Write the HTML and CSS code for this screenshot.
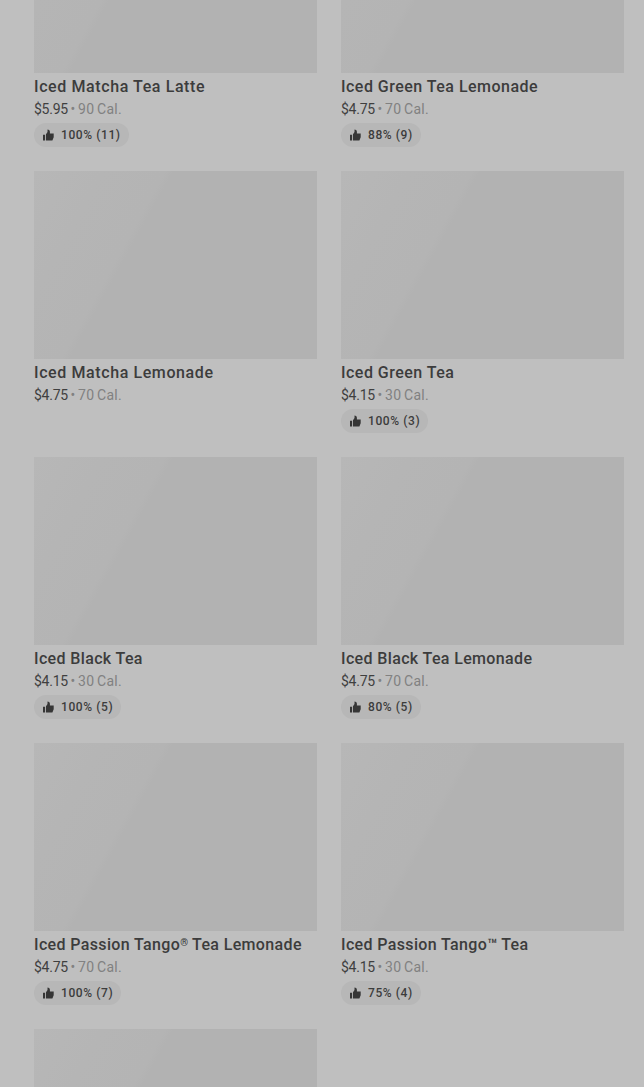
FILE: index.html
```html
<!DOCTYPE html>
<html lang="en">

<head>
    <meta charset="UTF-8">
    <meta name="viewport" content="width=device-width, initial-scale=1.0">
    <title>Iced Teas</title>
    <link rel="stylesheet" href="styles.css">
</head>

<body>
    <svg width="0" height="0" class="sprite">
        <symbol id="thumb" viewBox="0 0 12 12">
            <path d="M1 5.8h2.1v5.7H1zM4 5.2 5.5 3V0.6c1.5 0 2.4 0.9 2.4 2.3v1.6h3.8v3.8L10.4 11.5H4z" />
        </symbol>
    </svg>

    <main class="menu">
        <div class="item">
            <div class="photo"></div>
            <h3 class="name name-wide">Iced Matcha Tea Latte</h3>
            <p class="info"><span class="price">$5.95</span> • 90 Cal.</p>
            <div class="rating"><svg class="icon"><use href="#thumb" /></svg><span>100% (11)</span></div>
        </div>
        <div class="item">
            <div class="photo"></div>
            <h3 class="name">Iced Green Tea Lemonade</h3>
            <p class="info"><span class="price">$4.75</span> • 70 Cal.</p>
            <div class="rating"><svg class="icon"><use href="#thumb" /></svg><span>88% (9)</span></div>
        </div>
        <div class="item">
            <div class="photo"></div>
            <h3 class="name name-wide">Iced Matcha Lemonade</h3>
            <p class="info"><span class="price">$4.75</span> • 70 Cal.</p>
        </div>
        <div class="item">
            <div class="photo"></div>
            <h3 class="name">Iced Green Tea</h3>
            <p class="info"><span class="price">$4.15</span> • 30 Cal.</p>
            <div class="rating"><svg class="icon"><use href="#thumb" /></svg><span>100% (3)</span></div>
        </div>
        <div class="item">
            <div class="photo"></div>
            <h3 class="name name-tight">Iced Black Tea</h3>
            <p class="info"><span class="price">$4.15</span> • 30 Cal.</p>
            <div class="rating"><svg class="icon"><use href="#thumb" /></svg><span>100% (5)</span></div>
        </div>
        <div class="item">
            <div class="photo"></div>
            <h3 class="name name-tight">Iced Black Tea Lemonade</h3>
            <p class="info"><span class="price">$4.75</span> • 70 Cal.</p>
            <div class="rating"><svg class="icon"><use href="#thumb" /></svg><span>80% (5)</span></div>
        </div>
        <div class="item">
            <div class="photo"></div>
            <h3 class="name name-tight">Iced Passion Tango<span class="reg">®</span> Tea Lemonade</h3>
            <p class="info"><span class="price">$4.75</span> • 70 Cal.</p>
            <div class="rating"><svg class="icon"><use href="#thumb" /></svg><span>100% (7)</span></div>
        </div>
        <div class="item">
            <div class="photo"></div>
            <h3 class="name name-tight">Iced Passion Tango<span class="tm">™</span> Tea</h3>
            <p class="info"><span class="price">$4.15</span> • 30 Cal.</p>
            <div class="rating"><svg class="icon"><use href="#thumb" /></svg><span>75% (4)</span></div>
        </div>
        <div class="item item-cut">
            <div class="photo"></div>
        </div>
    </main>
</body>

</html>
```

FILE: styles.css
```css
* {
    box-sizing: border-box;
}

body {
    margin: 0;
    height: 1087px;
    overflow: hidden;
    background-color: #bfbfbf;
    font-family: Roboto, sans-serif;
}

.sprite {
    display: none;
}

/* list is scrolled part way through the first row */
.menu {
    display: grid;
    grid-template-columns: 283px 283px;
    grid-template-rows: repeat(4, 262px) 58px;
    gap: 24px;
    margin-top: -115px;
    padding: 0 20px 0 34px;
}

.photo {
    height: 188px;
    background: linear-gradient(119deg, #b7b7b7 0, #b5b5b5 60px, #b4b4b4 115px, #b2b2b2 122px) 0 0 / 283px 188px no-repeat;
}

.item-cut .photo {
    height: 58px;
}

.name {
    margin: 2px 0 0;
    font-size: 16px;
    font-weight: 500;
    line-height: 24px;
    letter-spacing: 0.48px;
    color: #3c3c3c;
    white-space: nowrap;
}

.name-wide {
    letter-spacing: 0.6px;
}

.name-tight {
    letter-spacing: 0.36px;
}

.reg {
    font-size: 10px;
    font-weight: 700;
    line-height: 0;
    vertical-align: 4px;
    letter-spacing: 0;
}

.tm {
    letter-spacing: 0;
}

.info {
    margin: 0;
    font-size: 14px;
    line-height: 20px;
    letter-spacing: 0.3px;
    word-spacing: -1.2px;
    color: #818181;
}

.price {
    letter-spacing: -0.25px;
    color: #3f3f3f;
}

.rating {
    display: inline-flex;
    align-items: center;
    gap: 7px;
    height: 24px;
    margin-top: 4px;
    padding: 0 8px;
    border-radius: 12px;
    background-color: #b7b7b7;
    font-size: 12px;
    font-weight: 500;
    letter-spacing: 0.6px;
    color: #3c3c3c;
}

.icon {
    width: 12px;
    height: 12px;
    fill: #363636;
}
```
